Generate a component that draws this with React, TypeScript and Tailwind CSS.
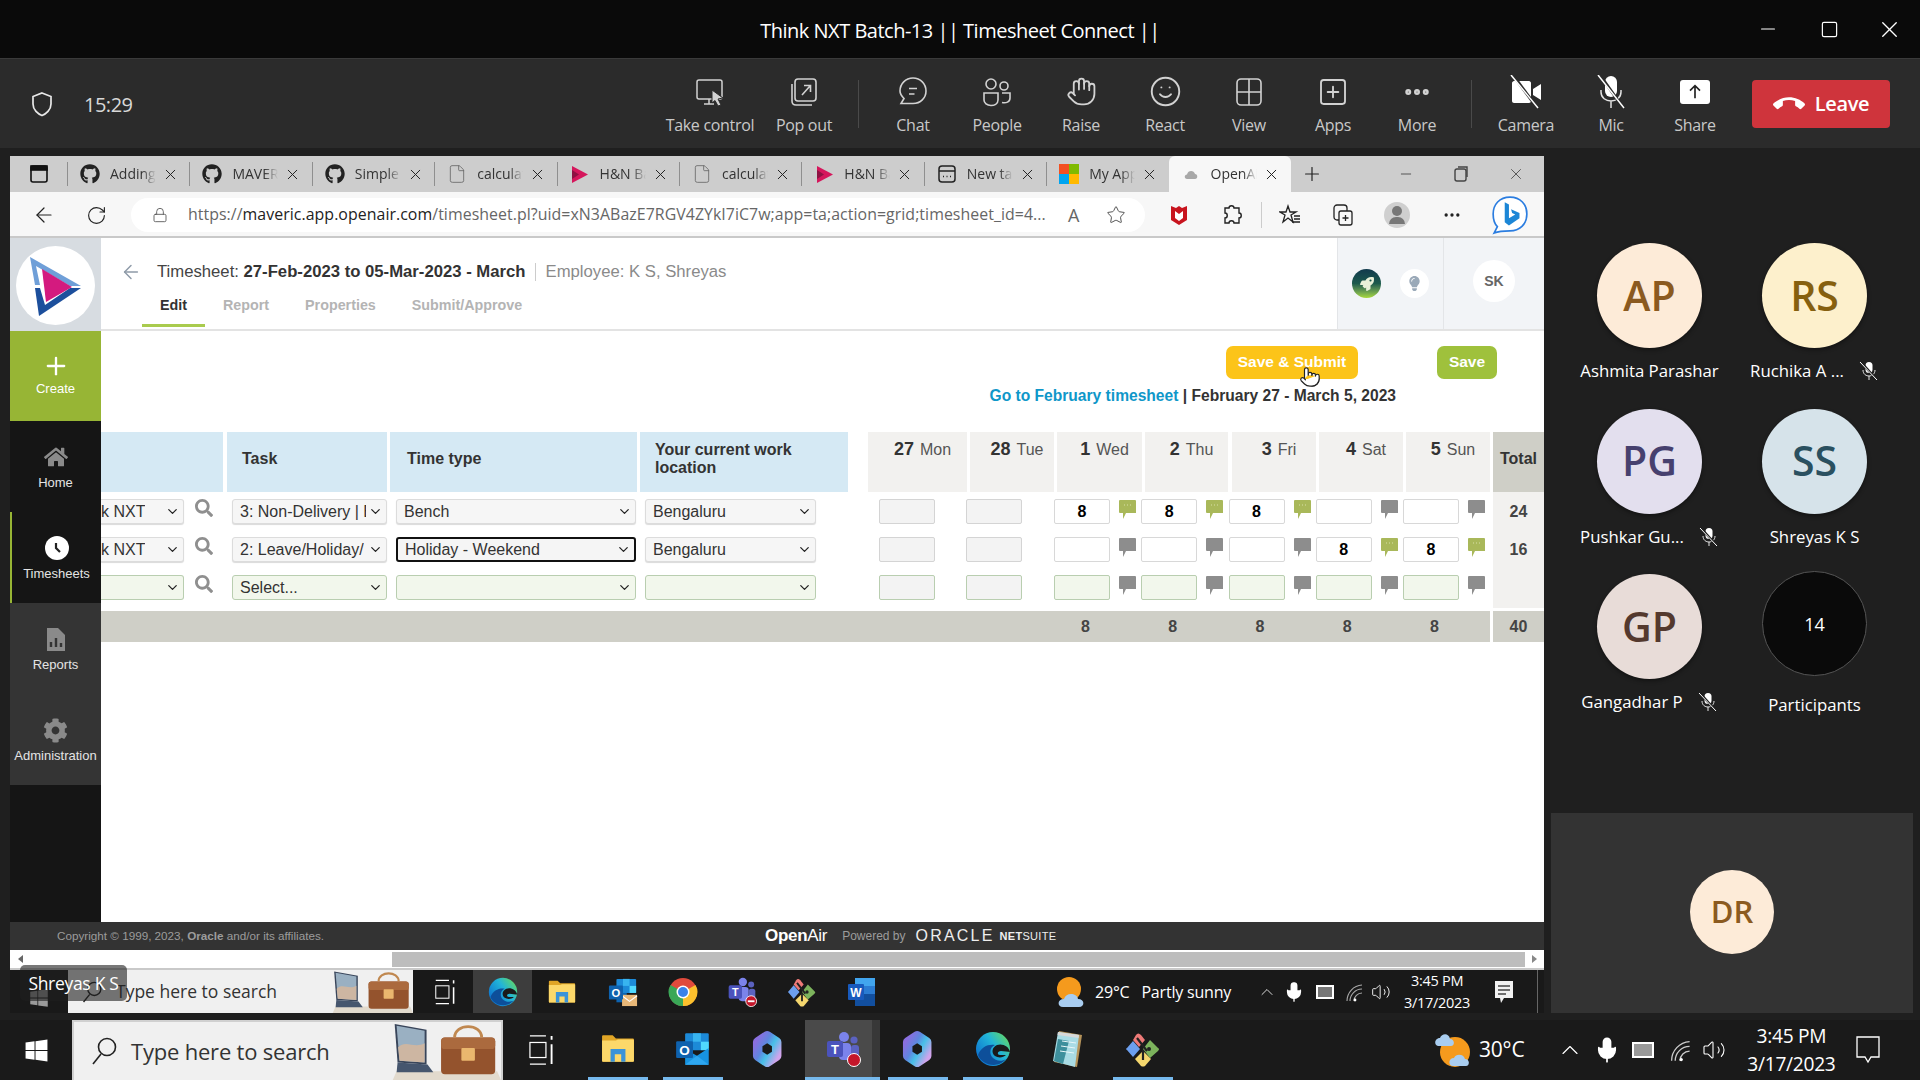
import { ChevronDown, ChevronUp, Ellipsis, Hand, Mic, Minus, Plus, Pointer, RotateCw, Smile, Square, SquarePlus, Star, Volume2, X, ArrowLeft, Lock, File } from "lucide-react";
import { FaCog, FaGithub, FaHome, FaLightbulb, FaRocket, FaSearch, FaWindows } from "react-icons/fa";
import { MdCallEnd } from "react-icons/md";

const teams = "font-['Open_Sans','Noto_Sans',sans-serif]";
const arial = "font-['Liberation_Sans',Arial,sans-serif]";

function ToolBtn({ label, w, children }: { label: string; w: string; children: React.ReactNode }) {
  return (
    <div className={`${w} flex flex-col items-center`}>
      <div className="h-[36px] pt-[3px] flex items-center justify-center">{children}</div>
      <span className="mt-[7px] text-[16px] leading-[20px] text-[#c8c8c8] whitespace-nowrap tracking-[-0.3px]">{label}</span>
    </div>
  );
}

function TitleBar() {
  return (
    <div className="h-[58px] bg-[#0a0a0a] grid grid-cols-[1fr_auto_1fr] items-center text-white">
      <div />
      <div className="text-[20px] tracking-[-0.5px] pt-[3px]">Think NXT Batch-13 || Timesheet Connect ||</div>
      <div className="flex justify-end items-center pr-[17px]">
        <Minus size={22} strokeWidth={1.3} />
        <Square size={19} strokeWidth={1.5} className="ml-[41px]" />
        <X size={27} strokeWidth={1.2} className="ml-[37px]" />
      </div>
    </div>
  );
}

function Toolbar() {
  const stroke = "#d2d2d2";
  return (
    <div className="h-[90px] bg-[#2b2b2b] border-t border-[#3a3a3a] flex items-center">
      <div className="w-[663px] flex items-center pl-[30px]">
        <svg width="24" height="26" viewBox="0 0 24 26" fill="none" stroke="#e8e8e8" strokeWidth="1.7">
          <path d="M12 2 L21 5.5 V13 C21 19 16 23 12 24.5 C8 23 3 19 3 13 V5.5 Z" />
        </svg>
        <span className="ml-[30px] pt-[2px] text-[20px] text-[#d8d8d8] tracking-[-0.5px]">15:29</span>
      </div>
      <ToolBtn label="Take control" w="w-[94px]">
        <svg width="30" height="30" viewBox="0 0 30 30" fill="none" stroke={stroke} strokeWidth="1.5">
          <rect x="2" y="3" width="25" height="19" rx="2" />
          <path d="M9 27 H19 M14 22 V27" />
          <path d="M17 13 L28 21 L23 22 L26 28 L23 29 L20 23.5 L17 26 Z" fill="#d2d2d2" stroke="#2b2b2b" strokeWidth="1" />
        </svg>
      </ToolBtn>
      <ToolBtn label="Pop out" w="w-[94px]">
        <svg width="28" height="30" viewBox="0 0 28 30" fill="none" stroke={stroke} strokeWidth="1.6">
          <rect x="5" y="2" width="21" height="22" rx="3" />
          <path d="M2 7 V24 C2 27 4 28 6 28 H22" />
          <path d="M12 18 L20 9 M14 8.5 H20.5 V15" />
        </svg>
      </ToolBtn>
      <div className="ml-[7px] w-px h-[48px] bg-[#4a4a4a]" />
      <div className="ml-[12px] flex">
        <ToolBtn label="Chat" w="w-[84px]">
          <svg width="30" height="32" viewBox="0 0 30 32" fill="none" stroke={stroke} strokeWidth="1.6">
            <path d="M15 2 C22.5 2 28 8 28 15 C28 22 22.5 27.5 15 27.5 H3 L6 22.5 C3.5 20 2 18 2 15 C2 8 7.5 2 15 2 Z" />
            <path d="M11 12.5 H19 M11 18 H16.5" />
          </svg>
        </ToolBtn>
        <ToolBtn label="People" w="w-[84px]">
          <svg width="32" height="30" viewBox="0 0 32 30" fill="none" stroke={stroke} strokeWidth="1.6">
            <circle cx="10" cy="7" r="5" />
            <circle cx="23" cy="9" r="4" />
            <path d="M3 16 H17 V23 C17 27 13 28.5 10 28.5 C6 28.5 3 26 3 23 Z" />
            <path d="M21 16 H29 V21 C29 25 25 26.5 21 25.5" />
          </svg>
        </ToolBtn>
        <ToolBtn label="Raise" w="w-[84px]">
          <Hand size={31} strokeWidth={1.4} color={stroke} />
        </ToolBtn>
        <ToolBtn label="React" w="w-[84px]">
          <Smile size={33} strokeWidth={1.4} color={stroke} />
        </ToolBtn>
        <ToolBtn label="View" w="w-[84px]">
          <svg width="28" height="30" viewBox="0 0 28 30" fill="none" stroke={stroke} strokeWidth="1.6">
            <rect x="2" y="2" width="24" height="26" rx="4" />
            <path d="M14 2 V28 M2 15 H26" />
          </svg>
        </ToolBtn>
        <ToolBtn label="Apps" w="w-[84px]">
          <SquarePlus size={32} strokeWidth={1.4} color={stroke} />
        </ToolBtn>
        <ToolBtn label="More" w="w-[84px]">
          <Ellipsis size={30} strokeWidth={2.8} color={stroke} />
        </ToolBtn>
      </div>
      <div className="ml-[12px] w-px h-[48px] bg-[#4a4a4a]" />
      <div className="ml-[12px] flex">
        <ToolBtn label="Camera" w="w-[84px]">
          <svg width="34" height="34" viewBox="0 0 34 34">
            <path d="M3 8 C3 7 4 6 5 6 H20 C21 6 22 7 22 8 V26 C22 27 21 28 20 28 H5 C4 28 3 27 3 26 Z M24 14 L32 9 V25 L24 20 Z" fill="#fff" />
            <path d="M4 0 L29 34" stroke="#2b2b2b" strokeWidth="3" />
            <path d="M2 0 L29 33" stroke="#fff" strokeWidth="1.5" />
          </svg>
        </ToolBtn>
        <ToolBtn label="Mic" w="w-[86px]">
          <svg width="32" height="34" viewBox="0 0 32 34" fill="none">
            <rect x="10" y="1" width="12" height="21" rx="6" fill="#fff" />
            <path d="M6 15 V17 C6 23 11 26 16 26 C21 26 26 23 26 17 V15 M16 26 V33" stroke="#e2e2e2" strokeWidth="1.5" />
            <path d="M5 0 L29 34" stroke="#2b2b2b" strokeWidth="3" />
            <path d="M3 0 L29 33" stroke="#fff" strokeWidth="1.5" />
          </svg>
        </ToolBtn>
        <ToolBtn label="Share" w="w-[82px]">
          <div className="w-[30px] h-[24px] rounded-[3px] bg-white flex items-center justify-center">
            <svg width="14" height="15" viewBox="0 0 16 18" fill="none" stroke="#222" strokeWidth="2">
              <path d="M8 17 V2 M2 8 L8 2 L14 8" />
            </svg>
          </div>
        </ToolBtn>
      </div>
      <div className="ml-[16px] w-[138px] h-[48px] rounded-[4px] bg-[#cf343c] flex items-center justify-center gap-[10px] text-white">
        <MdCallEnd size={32} />
        <span className="text-[20px] font-semibold tracking-[-0.3px]">Leave</span>
      </div>
    </div>
  );
}

function Tab({ icon, label, active }: { icon: React.ReactNode; label: string; active?: boolean }) {
  return (
    <div className={`w-[122.4px] h-full flex items-center ${active ? "bg-[#f7f7f7] rounded-t-[6px]" : "py-[6px]"}`}>
      <div className={`h-full w-full flex items-center pl-[12px] ${active ? "" : "border-l border-[#8f8f8f]"}`}>
        <div className="w-[20px] flex justify-center shrink-0">{icon}</div>
        <span className="ml-[10px] pb-[2px] w-[46px] overflow-hidden whitespace-nowrap text-[14px] text-[#333] [mask-image:linear-gradient(to_right,black_70%,transparent)]">
          {label}
        </span>
        <X size={17} strokeWidth={1.4} className="ml-[6px] text-[#222]" />
      </div>
    </div>
  );
}

function HnIcon() {
  return (
    <svg width="19" height="19" viewBox="0 0 19 19">
      <path d="M2 1 L18 9.5 L2 18 Z" fill="#d5175c" />
      <path d="M2 5 L9 9.5 L2 14 Z" fill="#8e1243" />
    </svg>
  );
}

function TabStrip() {
  const gh = <FaGithub size={20} color="#222" />;
  const doc = <File size={20} strokeWidth={1} color="#666" />;
  return (
    <div className={`h-[36px] bg-[#cdcdcd] flex items-center ${teams}`}>
      <div className="w-[57px] flex justify-center">
        <svg width="18" height="20" viewBox="0 0 18 20" fill="none" stroke="#111" strokeWidth="1.6">
          <rect x="1" y="2" width="16" height="16" rx="2" />
          <rect x="1" y="2" width="16" height="4" fill="#111" />
        </svg>
      </div>
      <Tab icon={gh} label="Adding" />
      <Tab icon={gh} label="MAVERIC" />
      <Tab icon={gh} label="Simple" />
      <Tab icon={doc} label="calculate" />
      <Tab icon={<HnIcon />} label="H&N Bank" />
      <Tab icon={doc} label="calculate" />
      <Tab icon={<HnIcon />} label="H&N Bank" />
      <Tab
        icon={
          <svg width="18" height="20" viewBox="0 0 18 20" fill="none" stroke="#222" strokeWidth="1.5">
            <rect x="1" y="2" width="16" height="16" rx="3" />
            <path d="M1 7 H17 M5 12.5 H6 M8.5 12.5 H9.5 M12 12.5 H13" />
          </svg>
        }
        label="New tab"
      />
      <Tab
        icon={
          <div className="grid grid-cols-2 w-[20px] h-[20px]">
            <div className="bg-[#f25022]" />
            <div className="bg-[#7fba00]" />
            <div className="bg-[#00a4ef]" />
            <div className="bg-[#ffb900]" />
          </div>
        }
        label="My Apps"
      />
      <Tab
        active
        icon={
          <svg width="16" height="12" viewBox="0 0 16 12">
            <path d="M4 11 C1 11 1 6.5 4 6.5 C5 2 11 2 12 6 C15 6 15 11 12 11 Z" fill="#a8a8a8" />
          </svg>
        }
        label="OpenAir"
      />
      <Plus size={22} strokeWidth={1.3} className="ml-[10px] text-[#222]" />
      <Minus size={16} strokeWidth={1.3} className="ml-[75px] text-[#444]" />
      <svg width="16" height="18" viewBox="0 0 16 18" fill="none" stroke="#444" strokeWidth="1.4" className="ml-[39px]">
        <rect x="2" y="4" width="11" height="12" rx="2" />
        <path d="M5 2 H14 V12" />
      </svg>
      <X size={18} strokeWidth={1} className="ml-[38px] text-[#333]" />
    </div>
  );
}

function AddressBar() {
  return (
    <div className={`h-[46px] pt-[2px] bg-[#f7f7f7] border-b-2 border-[#c9c9c9] flex items-center ${teams}`}>
      <ArrowLeft size={24} strokeWidth={1.2} className="ml-[22px] text-[#222]" />
      <RotateCw size={21} strokeWidth={1.3} className="ml-[30px] text-[#222]" />
      <div className="ml-[24px] w-[1014px] h-[34px] bg-white rounded-full flex items-center pl-[21px]">
        <Lock size={16} strokeWidth={1.3} className="text-[#555]" />
        <span className="ml-[20px] w-[860px] overflow-hidden whitespace-nowrap text-[15.9px] tracking-[0.05px] text-[#666]">
          https://<span className="text-[#222]">maveric.app.openair.com</span>/timesheet.pl?uid=xN3ABazE7RGV4ZYkI7iC7w;app=ta;action=grid;timesheet_id=4...
        </span>
        <span className="ml-[20px] text-[18px] text-[#666]">A</span>
        <Star size={20} strokeWidth={1.2} className="ml-[27px] text-[#555]" />
      </div>
      <svg width="18" height="22" viewBox="0 0 18 22" className="ml-[25px]">
        <path d="M1 2 L6 4 L9 2 L12 4 L17 2 V16 L9 21 L1 16 Z" fill="#c8141e" />
        <path d="M5 7 L9 10 L13 7 V14 L9 17 L5 14 Z" fill="#fff" />
      </svg>
      <svg width="20" height="22" viewBox="0 0 20 22" fill="none" stroke="#222" strokeWidth="1.4" className="ml-[34px]">
        <path d="M7 4 C7 1 12 1 12 4 H17 V9 C20 9 20 14 17 14 V19 H12 C12 16 7 16 7 19 H3 V14 C6 14 6 9 3 9 V4 Z" />
      </svg>
      <div className="ml-[19px] w-px h-[26px] bg-[#cccccc]" />
      <svg width="22" height="22" viewBox="0 0 22 22" fill="none" stroke="#222" strokeWidth="1.3" className="ml-[17px]">
        <path d="M9 2 L11 8 H17 L12 11 L14 18 L9 14 L4 18 L6 11 L1 8 H7 Z" />
        <path d="M15 12 H21 M15 15 H21 M13 18 H21" />
      </svg>
      <svg width="22" height="24" viewBox="0 0 22 24" fill="none" stroke="#222" strokeWidth="1.3" className="ml-[31px]">
        <rect x="2" y="2" width="13" height="15" rx="3" />
        <rect x="7" y="8" width="13" height="14" rx="2" fill="#f7f7f7" />
        <path d="M13.5 12 V18 M10.5 15 H16.5" />
      </svg>
      <div className="ml-[30px] w-[26px] h-[26px] rounded-full bg-[#cfcfcf] flex flex-col items-center justify-center">
        <div className="w-[10px] h-[10px] rounded-full bg-[#777]" />
        <div className="w-[16px] h-[7px] mt-px rounded-t-full bg-[#777]" />
      </div>
      <Ellipsis size={20} strokeWidth={2} className="ml-[32px] text-[#222]" />
      <svg width="38" height="40" viewBox="0 0 36 38" className="ml-[29px]">
        <path d="M18 2 C28 2 34 9 34 18 C34 28 27 34 18 34 C13 34 8 34 3 36 L6 30 C3 27 2 23 2 18 C2 9 8 2 18 2 Z" fill="#fff" stroke="#2b7de0" strokeWidth="1.6" />
        <path d="M13 7 L17 9 V22 L23 18.5 L20 17 L19 13.5 L27 17 V22 L17 29 L13 26 Z" fill="#1c86d6" />
      </svg>
    </div>
  );
}

function SideItem({ icon, label, className }: { icon: React.ReactNode; label: string; className: string }) {
  return (
    <div className={`h-[91px] flex flex-col items-center pt-[24px] ${className}`}>
      <div className="h-[24px] flex items-center justify-center">{icon}</div>
      <span className="mt-[6px] text-[13px] leading-[16px] text-[#e4e4e4] whitespace-nowrap">{label}</span>
    </div>
  );
}

function Sidebar() {
  return (
    <div className="w-[91px] shrink-0 flex flex-col bg-[#151515]">
      <div className="h-[93px] bg-[#d7dce1] flex items-center justify-center pt-[2px]">
        <div className="w-[79px] h-[79px] rounded-full bg-white flex items-center justify-center">
          <svg width="60" height="64" viewBox="0 0 60 64">
            <path d="M4 3 L55 32 L44 32 L10 12 L14 31 L9 31 Z" fill="#6f9fd8" />
            <path d="M9 34 L14 34 L19 51 L44 34 L55 34 L13 62 Z" fill="#1c4f9c" />
            <path d="M16 15 L46 33 L20 48 Z" fill="#d41a7f" />
          </svg>
        </div>
      </div>
      <div className="h-[90px] bg-[#97b535] flex flex-col items-center pt-[21px]">
        <Plus size={28} strokeWidth={2} className="text-white" />
        <span className="mt-[1px] text-[13px] leading-[16px] text-white">Create</span>
      </div>
      <SideItem label="Home" className="" icon={<FaHome size={24} color="#8a8a8a" />} />
      <SideItem
        label="Timesheets"
        className="border-l-2 border-[#97b535]"
        icon={
          <div className="w-[24px] h-[24px] rounded-full bg-white flex items-center justify-center">
            <svg width="14" height="14" viewBox="0 0 14 14" fill="none" stroke="#222" strokeWidth="2.2">
              <path d="M6 2 V7 L10 11" />
            </svg>
          </div>
        }
      />
      <div className="bg-[#343434]">
        <SideItem
          label="Reports"
          className=""
          icon={
            <svg width="20" height="25" viewBox="0 0 20 25">
              <path d="M1 1 H12 L19 8 V24 H1 Z" fill="#8a8a8a" />
              <path d="M5 20 V15 M10 20 V11 M15 20 V16" stroke="#343434" strokeWidth="2.4" />
            </svg>
          }
        />
        <SideItem label="Administration" className="" icon={<FaCog size={25} color="#8a8a8a" />} />
      </div>
    </div>
  );
}

function Comment({ on }: { on?: boolean }) {
  return (
    <svg width="19" height="20" viewBox="0 0 19 20" className="ml-[8px] shrink-0 -mt-[6px]">
      <path d="M2 1 H17 Q18 1 18 2 V14 H8 L5 20 V14 H2 Q1 14 1 13 V2 Q1 1 2 1 Z" fill={on ? "#a9b85a" : "#8d8d8d"} />
      {on && <path d="M6 6 H7 M9 6 H10 M12 6 H13" stroke="#d8e0a8" strokeWidth="1" />}
    </svg>
  );
}

function Sel({ w, text, kind, clip }: { w: string; text?: string; kind?: "new" | "focus"; clip?: boolean }) {
  const look =
    kind === "new"
      ? "border-[#b9ceb0] bg-[#f2f7ec]"
      : kind === "focus"
        ? "border-[#111] border-2 bg-[#f5f5f5]"
        : "border-[#dcdcdc] bg-[#f6f6f6] shadow-[0_1px_1px_rgba(0,0,0,0.15)]";
  return (
    <div className={`${w} h-[25px] shrink-0 rounded-[3px] border flex items-center justify-between text-[16px] text-[#333] ${clip ? "border-l-0 rounded-l-none" : "pl-[7px]"} pr-[3px] ${look}`}>
      <span className="overflow-hidden whitespace-nowrap mr-[2px]">{text}</span>
      <ChevronDown size={15} strokeWidth={2} className="shrink-0 text-[#222]" />
    </div>
  );
}

function HourBox({ v, kind }: { v?: string; kind?: "off" | "new" | "offnew" }) {
  const look =
    kind === "off"
      ? "bg-[#f3f3f3] border-[#d4d4d4]"
      : kind === "offnew"
        ? "bg-[#f3f3f3] border-[#b9ceb0]"
        : kind === "new"
          ? "bg-[#f2f7ec] border-[#b9ceb0]"
          : "bg-white border-[#d8d8d8]";
  return (
    <div className={`w-[56px] h-[25px] shrink-0 rounded-[2px] border flex items-center justify-center text-[16px] font-bold text-black ${look}`}>{v}</div>
  );
}

function DayCell({ v, on, fresh }: { v?: string; on?: boolean; fresh?: boolean }) {
  return (
    <div className="w-[87.25px] shrink-0 flex items-center">
      <HourBox v={v} kind={fresh ? "new" : undefined} />
      <Comment on={on} />
    </div>
  );
}

function DayHead({ w, n, d }: { w: string; n: string; d: string }) {
  return (
    <div className={`${w} h-full bg-[#f2f1ef] flex justify-center pt-[6px] pl-[10px] text-[16px] text-[#555]`}>
      <span className="font-bold text-[#333] text-[18px] leading-[22px] mr-[6px]">{n}</span>
      <span className="leading-[24px]">{d}</span>
    </div>
  );
}

function Row({ a, task, type, loc, mt, children, off, kinds }: { a?: string; task: string; type?: string; loc?: string; mt: string; children: React.ReactNode; off: "off" | "offnew"; kinds?: "new" | "focus" }) {
  return (
    <div className={`flex items-center h-[25px] ${mt}`}>
      <Sel w="w-[83px]" text={a} clip kind={kinds === "new" ? "new" : undefined} />
      <FaSearch size={18} color="#8f8f8f" className="ml-[11px] -mt-[7px] shrink-0" />
      <Sel w="w-[155px] ml-[19px]" text={task} kind={kinds === "new" ? "new" : undefined} />
      <Sel w="w-[240px] ml-[9px]" text={type} kind={kinds} />
      <Sel w="w-[171px] ml-[9px]" text={loc} kind={kinds === "new" ? "new" : undefined} />
      <div className="ml-[63px]"><HourBox kind={off} /></div>
      <div className="ml-[31px]"><HourBox kind={off} /></div>
      <div className="ml-[32px] flex">{children}</div>
    </div>
  );
}

function Table() {
  const blue = "h-full bg-[#d5e9f4] flex items-center pb-[6px] font-bold text-[16px] text-[#333]";
  return (
    <div className={`${arial}`}>
      <div className="flex h-[60px] items-stretch">
        <div className={`${blue} w-[122px]`} />
        <div className={`${blue} w-[160px] ml-[4px] pl-[15px]`}>Task</div>
        <div className={`${blue} w-[247px] ml-[3px] pl-[17px]`}>Time type</div>
        <div className={`${blue} w-[208px] ml-[3px] pl-[15px] leading-[18px] text-[15.6px]`}>Your current work location</div>
        <div className="w-[20px]" />
        <DayHead w="w-[99px]" n="27" d="Mon" />
        <div className="w-[3px]" />
        <DayHead w="w-[84px]" n="28" d="Tue" />
        <div className="w-[3px]" />
        <DayHead w="w-[85px]" n="1" d="Wed" />
        <div className="w-[3px]" />
        <DayHead w="w-[83px]" n="2" d="Thu" />
        <div className="w-[4px]" />
        <DayHead w="w-[84px]" n="3" d="Fri" />
        <div className="w-[3px]" />
        <DayHead w="w-[84px]" n="4" d="Sat" />
        <div className="w-[3px]" />
        <DayHead w="w-[84px]" n="5" d="Sun" />
        <div className="w-[3px]" />
        <div className="w-[51px] bg-[#cfcfc7] flex items-center justify-center pb-[6px] font-bold text-[16px] text-[#333]">Total</div>
      </div>
      <div className="flex h-[116px]">
        <div className="w-[1392px]">
          <Row mt="mt-[7px]" a="k NXT" task="3: Non-Delivery | Bench" type="Bench" loc="Bengaluru" off="off">
            <DayCell v="8" on />
            <DayCell v="8" on />
            <DayCell v="8" on />
            <DayCell />
            <DayCell />
          </Row>
          <Row mt="mt-[13px]" a="k NXT" task="2: Leave/Holiday/" type="Holiday - Weekend" loc="Bengaluru" off="off" kinds="focus">
            <DayCell />
            <DayCell />
            <DayCell />
            <DayCell v="8" on />
            <DayCell v="8" on />
          </Row>
          <Row mt="mt-[13px]" task="Select..." off="offnew" kinds="new">
            <DayCell fresh />
            <DayCell fresh />
            <DayCell fresh />
            <DayCell fresh />
            <DayCell fresh />
          </Row>
        </div>
        <div className="w-[51px] bg-[#f2f1ef] flex flex-col items-center pt-[7px] font-bold text-[16px] text-[#444]">
          <span className="h-[25px] leading-[25px]">24</span>
          <span className="mt-[13px] h-[25px] leading-[25px]">16</span>
        </div>
      </div>
      <div className="mt-[3px] h-[31px] flex text-[16px] font-bold text-[#444]">
        <div className="w-[1389px] bg-[#cfcfc7] flex items-center pl-[980px]">
          <span className="w-[87.25px] shrink-0">8</span>
          <span className="w-[87.25px] shrink-0">8</span>
          <span className="w-[87.25px] shrink-0">8</span>
          <span className="w-[87.25px] shrink-0">8</span>
          <span className="w-[87.25px] shrink-0">8</span>
        </div>
        <div className="w-[51px] ml-[3px] bg-[#cfcfc7] flex items-center justify-center">40</div>
      </div>
    </div>
  );
}

function OpenAirApp() {
  return (
    <div className={`h-[684px] flex bg-white ${arial}`}>
      <Sidebar />
      <div className="flex-1 flex flex-col">
        <div className="h-[93px] flex border-b-2 border-[#e3e3e3]">
          <div className="flex-1 pl-[19px]">
            <div className="flex items-center h-[34px] mt-[17px] text-[16.7px] text-[#444]">
              <ArrowLeft size={22} strokeWidth={1.6} className="text-[#8e9aa8]" />
              <span className="ml-[15px]">Timesheet: <b className="text-[#333]">27-Feb-2023 to 05-Mar-2023 - March</b></span>
              <div className="ml-[9px] w-px h-[18px] bg-[#cccccc]" />
              <span className="ml-[10px] text-[#8a8a8a]">Employee: K S, Shreyas</span>
            </div>
            <div className="flex items-start h-[40px] -mt-[2px] -ml-[19px] pl-[41px] text-[14.3px] font-bold text-[#b4b4b4]">
              <div className="w-[63px] h-[40px] pt-[8px] text-center text-[#333] border-b-[3px] border-[#a9cb4e]">Edit</div>
              <span className="ml-[18px] pt-[8px]">Report</span>
              <span className="ml-[36px] pt-[8px]">Properties</span>
              <span className="ml-[36px] pt-[8px]">Submit/Approve</span>
            </div>
          </div>
          <div className="w-[207px] bg-[#f2f4f7] flex border-l border-[#e3e5e8]">
            <div className="w-[106px] border-r border-[#e3e5e8] flex items-center justify-center gap-[19px]">
              <div className="w-[29px] h-[29px] rounded-full bg-gradient-to-b from-[#123a4d] via-[#1c5a4c] to-[#a8d93a] flex items-center justify-center">
                <FaRocket size={14} color="#e8f0d8" />
              </div>
              <div className="w-[29px] h-[29px] rounded-full bg-white flex items-center justify-center">
                <FaLightbulb size={15} color="#9aa9b8" />
              </div>
            </div>
            <div className="flex-1 flex justify-center pt-[22px]">
              <div className="w-[42px] h-[42px] rounded-full bg-white flex items-center justify-center text-[14px] font-bold text-[#666]">SK</div>
            </div>
          </div>
        </div>
        <div className="h-[101px] flex flex-col">
          <div className="mt-[15px] flex justify-end pr-[47px] text-[15.5px] font-bold text-white">
            <div className="relative w-[132px] h-[33px] pb-[2px] rounded-[7px] bg-[#fcc419] flex items-center justify-center">
              Save &amp; Submit
              <Pointer size={22} strokeWidth={1.3} fill="#fff" className="absolute left-[73px] top-[20px] text-[#222]" />
            </div>
            <div className="ml-[79px] w-[60px] h-[33px] pb-[2px] rounded-[7px] bg-[#9fc13c] flex items-center justify-center">Save</div>
          </div>
          <div className="mt-[5px] pr-[148px] text-right text-[15.6px] font-bold text-[#333]">
            <span className="text-[#0f97c9]">Go to February timesheet</span> | February 27 - March 5, 2023
          </div>
        </div>
        <Table />
      </div>
    </div>
  );
}

function Footer() {
  return (
    <div className={`h-[28px] bg-[#333333] flex items-center text-[11.7px] text-[#9c9c9c] ${arial}`}>
      <span className="ml-[47px] w-[708px]">Copyright © 1999, 2023, <b>Oracle</b> and/or its affiliates.</span>
      <span className="text-[17px] text-white tracking-[-0.3px]"><b>Open</b>Air</span>
      <span className="ml-[15px] text-[12px]">Powered by</span>
      <span className="ml-[10px] text-[16px] tracking-[2.2px] text-[#eeeeee]">ORACLE</span>
      <span className="ml-[5px] text-[11px] text-[#eeeeee] tracking-[0.3px]"><b>NET</b>SUITE</span>
    </div>
  );
}

function Scroll() {
  return (
    <div className="h-[18px] bg-white flex items-center">
      <div className="w-[20px] flex justify-center">
        <div className="w-0 h-0 border-y-[4px] border-y-transparent border-r-[5px] border-r-[#666]" />
      </div>
      <div className="ml-[362px] w-[1133px] h-[15px] bg-[#bdbdbd]" />
      <div className="w-[19px] flex justify-center">
        <div className="w-0 h-0 border-y-[4px] border-y-transparent border-l-[5px] border-l-[#888]" />
      </div>
    </div>
  );
}

function Folder({ s = 32 }: { s?: number }) {
  return (
    <svg width={s} height={s} viewBox="0 0 32 32">
      <path d="M1 4 Q1 3 2 3 H11 L14 6 H30 Q31 6 31 7 V27 Q31 28 30 28 H2 Q1 28 1 27 Z" fill="#e0a526" />
      <path d="M1 8 H14 L16 7 H30 Q31 7 31 8 V27 Q31 28 30 28 H2 Q1 28 1 27 Z" fill="#fcd86a" />
      <path d="M9 16 H23 V28 H19 V21 H13 V28 H9 Z" fill="#3a93d8" />
    </svg>
  );
}

function Outlook({ s = 32, mail }: { s?: number; mail?: boolean }) {
  return (
    <svg width={s} height={s} viewBox="0 0 32 32">
      <rect x="9" y="2" width="21" height="15" rx="1" fill="#1c8ad8" />
      <rect x="16" y="2" width="7" height="7.5" fill="#38b4ef" />
      <rect x="23" y="9.5" width="7" height="7.5" fill="#50d9ff" />
      {mail ? (
        <>
          <path d="M9 17 H20 V27 H9 Z" fill="#0d63b0" />
          <rect x="15" y="19" width="16" height="12" fill="#e8b878" />
          <path d="M15 20 L23 26 L31 20" fill="none" stroke="#fff" strokeWidth="1.2" />
        </>
      ) : (
        <>
          <path d="M9 16 L19.5 22 L30 15 V30 H9 Z" fill="#1793e0" />
          <path d="M9 30 L19.5 22 L30 30 Z" fill="#2ea7f0" />
        </>
      )}
      <rect x="1" y="9" width="15" height="15" rx="1" fill="#0f62ae" />
      <text x="8.5" y="21" textAnchor="middle" fontSize="12" fontWeight="700" fill="#fff" fontFamily="Liberation Sans">O</text>
    </svg>
  );
}

function Copilot({ s = 38, id }: { s?: number; id: string }) {
  return (
    <svg width={s * 0.8} height={s} viewBox="0 0 32 40" fill="none">
      <defs>
        <linearGradient id={id} x1="0" y1="0.1" x2="1" y2="0.9">
          <stop offset="0" stopColor="#8a6fe0" />
          <stop offset="0.35" stopColor="#5f86e0" />
          <stop offset="0.6" stopColor="#48c0e8" />
          <stop offset="1" stopColor="#d0a4ec" />
        </linearGradient>
      </defs>
      <path d="M16 6 L26 12.5 V27.5 L16 34 L6 27.5 V12.5 Z" stroke={`url(#${id})`} strokeWidth="10" strokeLinejoin="round" fill={`url(#${id})`} />
      <path d="M11 17 L16 14 L21 17 V23 L16 26 L11 23 Z" fill="#1a1a1a" />
    </svg>
  );
}

function TeamsIcon({ s = 36, busy }: { s?: number; busy?: boolean }) {
  return (
    <svg width={s} height={s} viewBox="0 0 36 36">
      <circle cx="19" cy="6" r="5" fill="#7b83eb" />
      <circle cx="29" cy="9" r="3.6" fill="#5b62c0" />
      <rect x="14" y="12" width="12" height="17" rx="4" fill="#7b83eb" />
      <rect x="26" y="14" width="8" height="13" rx="3" fill="#5b62c0" />
      <rect x="2" y="10" width="16" height="16" rx="2" fill="#4b53bc" />
      <text x="10" y="23" textAnchor="middle" fontSize="13" fontWeight="700" fill="#fff" fontFamily="Liberation Sans">T</text>
      <circle cx="29" cy="29" r="6.5" fill="#c4162a" stroke="#fff" strokeWidth="1" />
      {busy && <rect x="25" y="28" width="8" height="2.2" fill="#fff" />}
    </svg>
  );
}

function Edge({ s = 36, id }: { s?: number; id: string }) {
  return (
    <svg width={s} height={s} viewBox="0 0 36 36">
      <defs>
        <linearGradient id={id} x1="0.9" y1="0.1" x2="0.1" y2="0.7">
          <stop offset="0" stopColor="#5fd66a" />
          <stop offset="0.45" stopColor="#22b5d8" />
          <stop offset="1" stopColor="#0f7ad0" />
        </linearGradient>
      </defs>
      <circle cx="18" cy="18" r="17" fill={`url(#${id})`} />
      <path d="M3 24 C6 33 22 39 31 28 C27 31 20 30 17 26 C14 22 15 16 20 14 C13 13 6 16 3 24 Z" fill="#0d4f9a" />
      <path d="M35 21 C34 15 27 12 22 14 C17 16 16 22 20 25 C23 27 28 27 31 24 L25 24 C22 24 22 20 26 20 C29 20 33 21 35 21 Z" fill="#1a1a1a" />
    </svg>
  );
}

function Gem({ s = 36 }: { s?: number }) {
  return (
    <svg width={s} height={s} viewBox="0 0 36 36">
      <path d="M11 4 Q13 1 16 4 L20 9 L14 16 L8 9 Z" fill="#ee7a78" />
      <path d="M25 9 L33 17 Q35 18 33 20 L25 27 L18 18 Z" fill="#7cb35c" />
      <path d="M8 10 L15 18 L8 26 L2 19 Q0 18 2 17 Z" fill="#6c9fee" />
      <path d="M18 20 L26 28 L20 35 Q18 36 16 35 L10 28 Z" fill="#f5d76e" />
      <path d="M12 7 L22 20 M18 19 V29" stroke="#222" strokeWidth="2.2" />
      <circle cx="24" cy="18" r="2" fill="#222" />
    </svg>
  );
}

function Notepad() {
  return (
    <svg width="34" height="40" viewBox="0 0 34 40">
      <path d="M8 2 L31 6 L26 38 L3 33 Z" fill="#b5935a" />
      <path d="M7 3 L28 6 L24 38 L2 32 Z" fill="#a9dbe4" />
      <path d="M3 32 L7 10 L18 12 L12 35 Z" fill="#3e8f9c" />
      <path d="M7 3 L28 6 L27.5 9 L6.5 6 Z" fill="#d8d8d8" />
      <path d="M11 12 L25 14 M10 17 L24 19 M9 22 L23 24" stroke="#e8f6f8" strokeWidth="1" />
    </svg>
  );
}

function Chrome() {
  return (
    <svg width="30" height="30" viewBox="0 0 30 30">
      <circle cx="15" cy="15" r="14" fill="#e04a3c" />
      <path d="M15 15 L27.5 8 A14 14 0 0 1 15 29 Z" fill="#fbc02d" />
      <path d="M15 15 L15 29 A14 14 0 0 1 2.5 8 Z" fill="#3aa757" />
      <circle cx="15" cy="15" r="6.5" fill="#fff" />
      <circle cx="15" cy="15" r="5" fill="#3b82e8" />
    </svg>
  );
}

function Word() {
  return (
    <svg width="30" height="32" viewBox="0 0 30 32">
      <rect x="8" y="2" width="20" height="28" rx="1" fill="#2b7cd3" />
      <rect x="8" y="2" width="20" height="8" fill="#41a5ee" />
      <rect x="8" y="18" width="20" height="12" fill="#124f9f" />
      <rect x="1" y="8" width="16" height="16" rx="1" fill="#185abd" />
      <text x="9" y="21" textAnchor="middle" fontSize="12" fontWeight="700" fill="#fff" fontFamily="Liberation Sans">W</text>
    </svg>
  );
}

function TaskView({ h }: { h: number }) {
  return (
    <svg width={h * 0.72} height={h} viewBox="0 0 26 36" fill="none" stroke="#fff" strokeWidth="1.3">
      <path d="M1 3 H18 M1 33 H18" />
      <rect x="1" y="10" width="17" height="16" />
      <path d="M24 3 V7 M24 12 V33" strokeWidth="2" />
    </svg>
  );
}

function SearchArt({ w }: { w: number }) {
  return (
    <svg width={w} height={w / 2} viewBox="0 0 120 60" className="block">
      <path d="M8 60 L12 51 H116 L120 60 Z" fill="#e2dacd" />
      <path d="M10 2 L43 8 V44 L13 42 Z" fill="#39455a" />
      <path d="M12 4 L41 9 V42 L15 40 Z" fill="#9ab0c2" />
      <path d="M13.5 26 C22 18 30 28 41 22 V42 L15 40 Z" fill="#cdb6a2" />
      <path d="M13 42 L44 44 L50 52 L12 52 Z" fill="#46566e" />
      <rect x="58" y="16" width="56" height="38" rx="4" fill="#94532d" />
      <rect x="58" y="16" width="56" height="12" rx="4" fill="#ab6a3e" />
      <path d="M72 16 C72 1 100 1 100 16" fill="none" stroke="#c08850" strokeWidth="3" />
      <rect x="79" y="27" width="14" height="13" rx="1" fill="#eab76e" />
    </svg>
  );
}

function InnerTaskbar() {
  return (
    <div className={`relative h-[45px] bg-[#191919] flex items-center border-t-2 border-[#c9c9c9] ${teams}`}>
      <div className="w-[58px] flex justify-center text-[#9a9a9a]">
        <FaWindows size={20} className="mt-[13px]" />
      </div>
      <div className="w-[345px] h-full bg-[#f0f0f0] flex items-center pl-[14px] overflow-hidden">
        <svg width="20" height="22" viewBox="0 0 26 28" fill="none" stroke="#222" strokeWidth="1.8" className="shrink-0">
          <circle cx="16" cy="10" r="8.5" />
          <path d="M10 17 L2 27" />
        </svg>
        <span className="ml-[14px] text-[17.5px] text-[#333] whitespace-nowrap">Type here to search</span>
        <div className="ml-auto self-end"><SearchArt w={86} /></div>
      </div>
      <div className="w-[60px] flex justify-center pl-[4px]"><TaskView h={28} /></div>
      <div className="w-[59px] h-full bg-[#3d3d3d] flex items-center justify-center"><Edge s={30} id="e1" /></div>
      <div className="w-[60px] flex justify-center"><Folder s={28} /></div>
      <div className="w-[61px] flex justify-center"><Outlook s={30} mail /></div>
      <div className="w-[59px] flex justify-center"><Chrome /></div>
      <div className="w-[60px] flex justify-center"><TeamsIcon s={30} busy /></div>
      <div className="w-[60px] flex justify-center"><Gem s={30} /></div>
      <div className="w-[60px] flex justify-center"><Word /></div>
      <div className="ml-[165px] flex items-center text-white text-[16px] tracking-[-0.2px]">
        <svg width="30" height="32" viewBox="0 0 30 32">
          <circle cx="12" cy="13" r="12" fill="#f59a1d" />
          <path d="M6 31 C0 31 0 23 7 23 C9 16 20 17 21 23 C28 23 28 31 22 31 Z" fill="#a9cdf0" />
        </svg>
        <span className="ml-[8px]">29°C</span>
        <span className="ml-[12px]">Partly sunny</span>
      </div>
      <ChevronUp size={20} strokeWidth={1} className="ml-[26px] text-white" />
      <Mic size={22} strokeWidth={1.5} className="ml-[6px] text-white" fill="#fff" />
      <div className="ml-[11px] w-[18px] h-[14px] border-2 border-white bg-[#777]" />
      <svg width="20" height="20" viewBox="0 0 20 20" fill="none" stroke="#aaa" strokeWidth="1.1" className="ml-[10px]">
        <path d="M3 19 A16 16 0 0 1 18 3 M6 19 A12 12 0 0 1 18 7 M10 19 A8 8 0 0 1 18 11" />
        <circle cx="11" cy="18" r="1.4" fill="#fff" stroke="none" />
      </svg>
      <Volume2 size={20} strokeWidth={1.1} className="ml-[7px] text-white" />
      <div className="ml-[10px] w-[72px] flex flex-col items-center text-[14.5px] leading-[22px] text-white whitespace-nowrap tracking-[-0.3px]">
        <span>3:45 PM</span>
        <span>3/17/2023</span>
      </div>
      <svg width="22" height="26" viewBox="0 0 22 26" className="ml-[20px]">
        <path d="M2 2 H20 V19 H11 L8 24 L7 19 H2 Z" fill="#f2f2f2" />
        <path d="M5 7 H17 M5 11 H17 M5 15 H13" stroke="#444" strokeWidth="1.4" />
      </svg>
      <div className="ml-auto mr-[6px] w-px h-full bg-[#666]" />
      <div className="absolute left-[10px] -top-[5px] w-[107px] h-[36px] rounded-[5px] bg-[#1e1e1e]/60 flex items-center justify-center text-[17.5px] text-white tracking-[-0.3px]">
        Shreyas K S
      </div>
    </div>
  );
}

function BigTaskCell({ w, bar, active, children }: { w: string; bar?: boolean; active?: boolean; children: React.ReactNode }) {
  return (
    <div className={`${w} h-full flex flex-col items-center ${active ? "bg-[linear-gradient(to_right,#4a4a4a_90%,#383838_90%)]" : ""}`}>
      <div className="flex-1 flex items-center justify-center">{children}</div>
      <div className={`h-[3px] ${active ? "w-full" : "w-[60px]"} ${bar ? "bg-[#76b9ed]" : ""}`} />
    </div>
  );
}

function BottomTaskbar() {
  return (
    <div className={`h-[60px] mt-[7px] bg-[#1a1a1a] flex items-center ${teams}`}>
      <div className="w-[72px] flex justify-center text-white"><FaWindows size={25} /></div>
      <div className="w-[431px] h-full bg-[#f0f0f0] border-t-2 border-x-2 border-[#d0d0d0] flex items-center pl-[17px] overflow-hidden">
        <svg width="26" height="28" viewBox="0 0 26 28" fill="none" stroke="#222" strokeWidth="1.6" className="shrink-0">
          <circle cx="16" cy="10" r="8.5" />
          <path d="M10 17 L2 27" />
        </svg>
        <span className="ml-[14px] text-[22px] text-[#333] tracking-[-0.2px] whitespace-nowrap">Type here to search</span>
        <div className="ml-auto self-end"><SearchArt w={116} /></div>
      </div>
      <div className="w-[77px] flex justify-center"><TaskView h={34} /></div>
      <BigTaskCell w="w-[75px]" bar><Folder s={34} /></BigTaskCell>
      <BigTaskCell w="w-[75px]" bar><Outlook s={36} /></BigTaskCell>
      <BigTaskCell w="w-[75px]"><Copilot id="c1" /></BigTaskCell>
      <BigTaskCell w="w-[75px]" bar active><TeamsIcon /></BigTaskCell>
      <BigTaskCell w="w-[75px]" bar><Copilot id="c2" /></BigTaskCell>
      <BigTaskCell w="w-[75px]" bar><Edge id="e2" /></BigTaskCell>
      <BigTaskCell w="w-[75px]"><Notepad /></BigTaskCell>
      <BigTaskCell w="w-[75px]" bar><Gem /></BigTaskCell>
      <svg width="36" height="40" viewBox="0 0 36 40" className="ml-[255px]">
        <circle cx="20" cy="22" r="15" fill="#f59a1d" />
        <path d="M3 16 C-1 16 -1 8 5 8 C7 3 14 3 15 9 C20 9 20 16 16 16 Z" fill="#a9cdf0" />
        <path d="M18 36 C13 36 13 28 19 28 C21 23 29 24 30 29 C35 29 35 36 31 36 Z" fill="#a9cdf0" />
      </svg>
      <span className="ml-[8px] text-[21px] text-white tracking-[-0.2px]">30°C</span>
      <ChevronUp size={28} strokeWidth={1} className="ml-[32px] text-white" />
      <Mic size={28} strokeWidth={1.5} className="ml-[9px] text-white" fill="#fff" />
      <div className="ml-[11px] w-[22px] h-[16px] border-2 border-white bg-[#999]" />
      <svg width="24" height="24" viewBox="0 0 20 20" fill="none" stroke="#ccc" strokeWidth="1.1" className="ml-[14px]">
        <path d="M3 19 A16 16 0 0 1 18 3 M6 19 A12 12 0 0 1 18 7 M10 19 A8 8 0 0 1 18 11" />
        <circle cx="11" cy="18" r="1.4" fill="#fff" stroke="none" />
      </svg>
      <Volume2 size={24} strokeWidth={1.1} className="ml-[10px] text-white" />
      <div className="ml-[20px] w-[90px] flex flex-col items-center text-[19.2px] leading-[28px] text-white whitespace-nowrap tracking-[-0.3px]">
        <span>3:45 PM</span>
        <span>3/17/2023</span>
      </div>
      <svg width="26" height="30" viewBox="0 0 26 30" fill="none" stroke="#fff" strokeWidth="1.3" className="ml-[19px]">
        <path d="M2 2 H24 V22 H16 L13 27 L10 22 H2 Z" />
      </svg>
    </div>
  );
}

function Mute() {
  return (
    <svg width="20" height="20" viewBox="0 0 20 20" fill="none">
      <rect x="6.5" y="1" width="7" height="11" rx="3.5" fill="#fff" />
      <path d="M4 9 C4 13 7 15 10 15 C13 15 16 13 16 9 M10 15 V19" stroke="#e8e8e8" strokeWidth="1" />
      <path d="M2 1 L18 19" stroke="#1f1f1f" strokeWidth="2.4" />
      <path d="M1 1 L18 19" stroke="#fff" strokeWidth="1" />
    </svg>
  );
}

function Person({ initials, name, bg, fg, muted }: { initials: string; name: string; bg: string; fg: string; muted?: boolean }) {
  return (
    <div className="w-[165px] flex flex-col items-center">
      <div className={`w-[105px] h-[105px] rounded-full flex items-center justify-center text-[41px] font-semibold shadow-[0_2px_4px_rgba(0,0,0,0.4)] ${bg} ${fg}`}>
        {initials}
      </div>
      <div className="mt-[11px] h-[24px] flex items-center justify-center text-[16.8px] text-white whitespace-nowrap">
        <span>{name}</span>
        {muted && <span className="ml-[15px]"><Mute /></span>}
      </div>
    </div>
  );
}

function Participants() {
  return (
    <div className={`flex-1 ${teams} flex flex-col`}>
      <div className="pl-[23px] pt-[87px] grid grid-cols-[165px_165px] auto-rows-[165.5px]">
        <Person initials="AP" name="Ashmita Parashar" bg="bg-[#fdebd8]" fg="text-[#8b5a20]" />
        <Person initials="RS" name="Ruchika A ..." bg="bg-[#fdf0cc]" fg="text-[#86600f]" muted />
        <Person initials="PG" name="Pushkar Gu..." bg="bg-[#e3dfee]" fg="text-[#46406e]" muted />
        <Person initials="SS" name="Shreyas K S" bg="bg-[#d6e3ea]" fg="text-[#2a5060]" />
        <Person initials="GP" name="Gangadhar P" bg="bg-[#e8dcd8]" fg="text-[#54392e]" muted />
        <div className="w-[165px] flex flex-col items-center -mt-[3px]">
          <div className="w-[105px] h-[105px] pt-[2px] rounded-full bg-[#0a0a0a] border border-[#555] flex items-center justify-center text-[18px] text-white">14</div>
          <span className="mt-[16px] h-[24px] text-[16.8px] text-white">Participants</span>
        </div>
      </div>
      <div className="ml-[7px] mr-[7px] mt-[73px] h-[200px] bg-[#333333] flex items-start justify-center pt-[57px]">
        <div className="w-[84px] h-[84px] rounded-full bg-[#fdebd8] flex items-center justify-center text-[31px] font-semibold text-[#8b5a20]">DR</div>
      </div>
    </div>
  );
}

export default function App() {
  return (
    <div className="w-[1920px] h-[1080px] overflow-hidden bg-[#1f1f1f] flex flex-col font-['Open_Sans',sans-serif]">
      <TitleBar />
      <Toolbar />
      <div className="h-[865px] pt-[8px] pl-[10px] flex">
        <div className="w-[1534px] shrink-0">
          <TabStrip />
          <AddressBar />
          <OpenAirApp />
          <Footer />
          <Scroll />
          <InnerTaskbar />
        </div>
        <Participants />
      </div>
      <BottomTaskbar />
    </div>
  );
}
